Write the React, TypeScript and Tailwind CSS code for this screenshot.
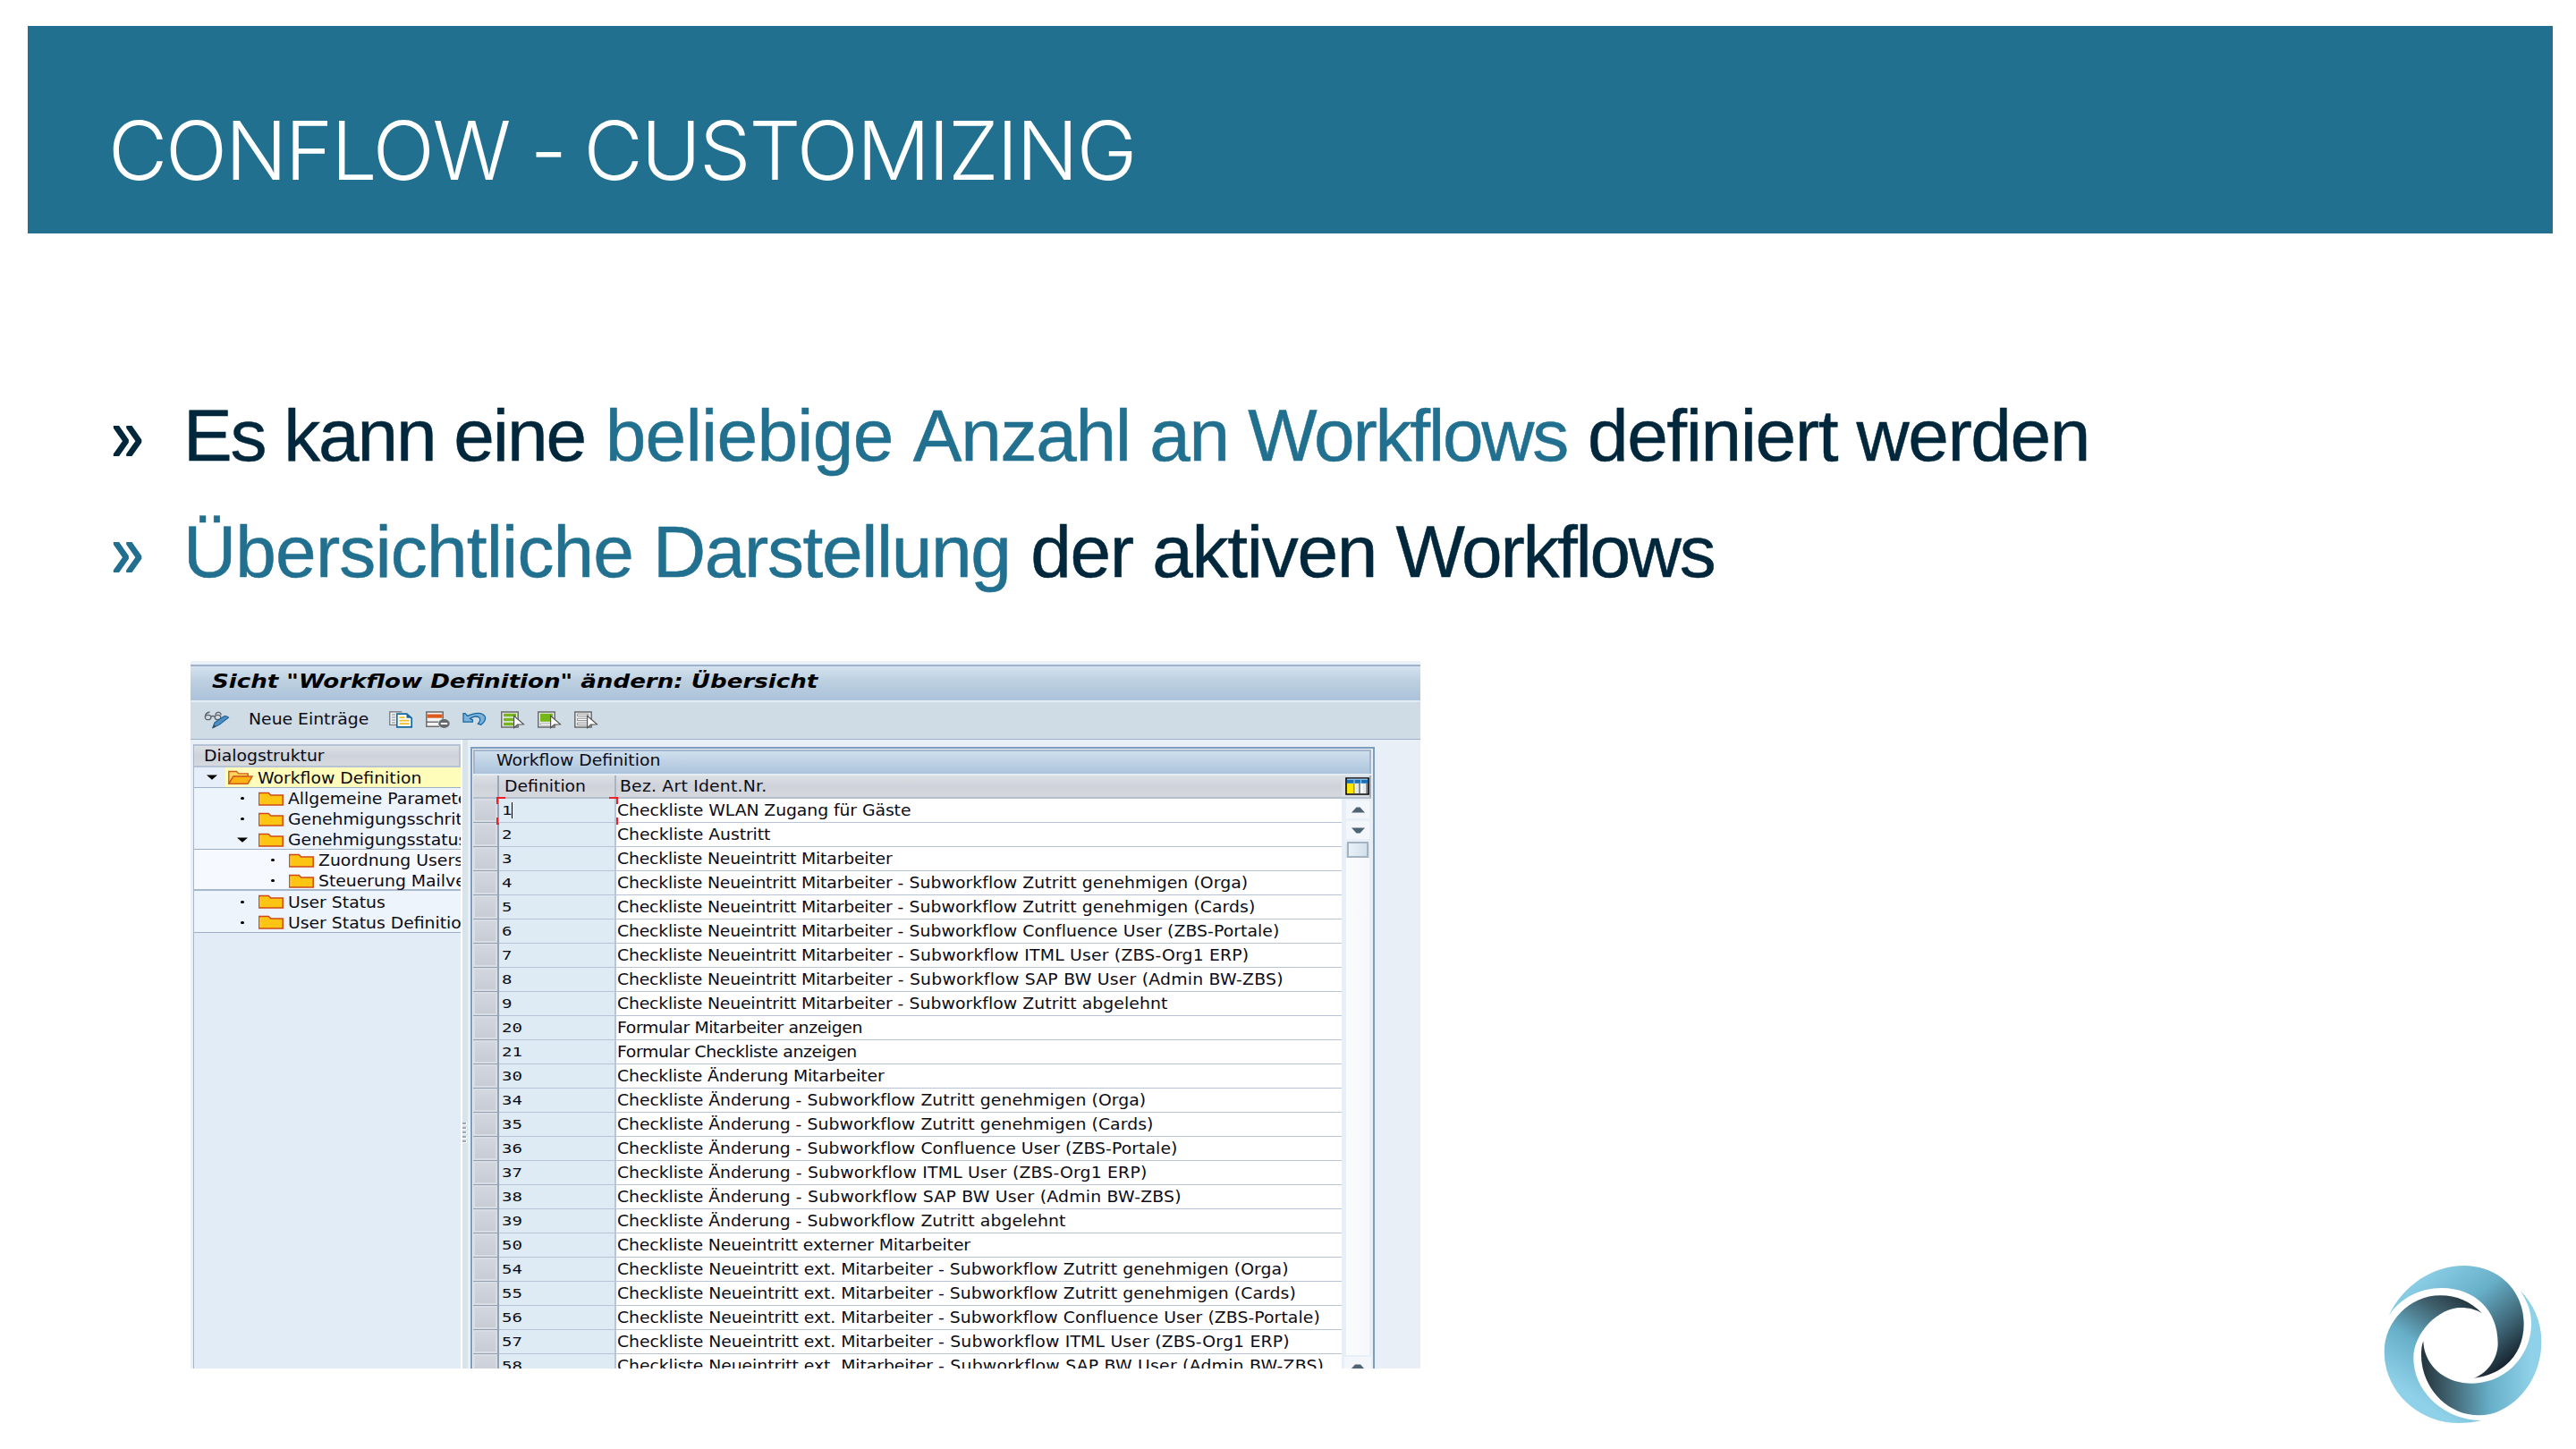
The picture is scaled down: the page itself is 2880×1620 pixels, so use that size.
import type { ReactNode } from "react";

const rows: [string, string, string?][] = [
  ["1", "Checkliste WLAN Zugang für Gäste"],
  ["2", "Checkliste Austritt"],
  ["3", "Checkliste Neueintritt Mitarbeiter"],
  ["4", "Checkliste Neueintritt Mitarbeiter", "Subworkflow Zutritt genehmigen (Orga)"],
  ["5", "Checkliste Neueintritt Mitarbeiter", "Subworkflow Zutritt genehmigen (Cards)"],
  ["6", "Checkliste Neueintritt Mitarbeiter", "Subworkflow Confluence User (ZBS-Portale)"],
  ["7", "Checkliste Neueintritt Mitarbeiter", "Subworkflow ITML User (ZBS-Org1 ERP)"],
  ["8", "Checkliste Neueintritt Mitarbeiter", "Subworkflow SAP BW User (Admin BW-ZBS)"],
  ["9", "Checkliste Neueintritt Mitarbeiter", "Subworkflow Zutritt abgelehnt"],
  ["20", "Formular Mitarbeiter anzeigen"],
  ["21", "Formular Checkliste anzeigen"],
  ["30", "Checkliste Änderung Mitarbeiter"],
  ["34", "Checkliste Änderung", "Subworkflow Zutritt genehmigen (Orga)"],
  ["35", "Checkliste Änderung", "Subworkflow Zutritt genehmigen (Cards)"],
  ["36", "Checkliste Änderung", "Subworkflow Confluence User (ZBS-Portale)"],
  ["37", "Checkliste Änderung", "Subworkflow ITML User (ZBS-Org1 ERP)"],
  ["38", "Checkliste Änderung", "Subworkflow SAP BW User (Admin BW-ZBS)"],
  ["39", "Checkliste Änderung", "Subworkflow Zutritt abgelehnt"],
  ["50", "Checkliste Neueintritt externer Mitarbeiter"],
  ["54", "Checkliste Neueintritt ext. Mitarbeiter", "Subworkflow Zutritt genehmigen (Orga)"],
  ["55", "Checkliste Neueintritt ext. Mitarbeiter", "Subworkflow Zutritt genehmigen (Cards)"],
  ["56", "Checkliste Neueintritt ext. Mitarbeiter", "Subworkflow Confluence User (ZBS-Portale)"],
  ["57", "Checkliste Neueintritt ext. Mitarbeiter", "Subworkflow ITML User (ZBS-Org1 ERP)"],
  ["58", "Checkliste Neueintritt ext. Mitarbeiter", "Subworkflow SAP BW User (Admin BW-ZBS)"],
];

function headTracking(text: string) {
  if (text.startsWith("Formular")) return "tracking-[-0.34px]";
  if (text.includes("ext. Mitarbeiter")) return "tracking-[-0.06px]";
  if (text.includes("externer")) return "tracking-[-0.1px]";
  if (text.includes("Mitarbeiter")) return "tracking-[-0.17px]";
  return "tracking-[-0.06px]";
}

function tailTracking(text: string) {
  if (text.includes("SAP")) return "tracking-[0.22px]";
  if (text.includes("ITML")) return "tracking-[0.19px]";
  return "tracking-[0.07px]";
}

function Wide({ children }: { children: ReactNode }) {
  return (
    <span className="inline-block origin-left scale-x-[1.081] whitespace-nowrap">{children}</span>
  );
}

function Folder() {
  return (
    <svg className="h-[16px] w-[28px] shrink-0" viewBox="0 0 28 16">
      <path d="M0.8 1.5h10.4l2.6 2.6h13.4v11H0.8z" fill="#fdc513" stroke="#cf4a1a" strokeWidth="1.5" />
      <path d="M1.9 14V2.8" stroke="#ffe27a" strokeWidth="0.8" />
    </svg>
  );
}

function FolderOpen() {
  return (
    <svg className="h-[16px] w-[28px] shrink-0" viewBox="0 0 28 16">
      <path d="M0.8 15V1.5h8.6l2.4 2.4h10.4v3.2H6z" fill="#fdd75a" stroke="#cf5a1a" strokeWidth="1.4" />
      <path d="M0.9 15.2 6 7h21l-5 8.2z" fill="#fbb312" stroke="#cf5a1a" strokeWidth="1.4" />
    </svg>
  );
}

function Dot() {
  return <span className="h-[3px] w-[4px] shrink-0 rounded-full bg-black" />;
}

function Caret() {
  return (
    <svg className="h-[6px] w-[12px] shrink-0" viewBox="0 0 12 6">
      <path d="M0 0.5h12L6 5.8z" fill="#000" />
    </svg>
  );
}

function TreeRow({ level, open, label }: { level: 1 | 2; open?: boolean; label: string }) {
  return (
    <div
      className={
        level === 1
          ? "flex h-[23.1px] items-center pl-[47px]"
          : "flex h-[23.1px] items-center pl-[81px]"
      }
    >
      <span className="flex w-[14px] shrink-0 items-center justify-center">{open ? <Caret /> : <Dot />}</span>
      <span className="ml-[11px] flex">
        <Folder />
      </span>
      <span className="ml-[5px] pt-[2px] leading-[23px]">
        <Wide>{label}</Wide>
      </span>
    </div>
  );
}

function GlassesPen() {
  return (
    <svg className="h-[20px] w-[30px]" viewBox="0 0 30 20">
      <g fill="none" stroke="#5f6468" strokeWidth="1.3">
        <ellipse cx="4.6" cy="7" rx="3.3" ry="2.7" />
        <ellipse cx="15.5" cy="7" rx="3.3" ry="2.7" />
        <path d="M8 6.5q2-2 4 0M1.3 6.5Q1.5 2 6.5 1M12.6 4.4q.6-2.4 3.4-3.2q3 .4 3.2 3" />
      </g>
      <path d="M9.8 18.8 12 12.8 22.5 5.8q2.8-.6 5 1.4L17 15.4z" fill="#4d8fc4" stroke="#1d5f94" strokeWidth="1.1" />
      <path d="M9.8 18.8l1.6-3.6 2 2.6z" fill="#444" />
    </svg>
  );
}

function CopyIcon() {
  return (
    <svg className="h-[20px] w-[28px]" viewBox="0 0 28 20">
      <path d="M8 15.5H0.8V0.8h13.5" fill="#eef3f7" stroke="#6b6f73" strokeWidth="1.2" />
      <path d="M3 4h4M3 7h4M3 10h4M3 13h4" stroke="#888" strokeWidth="1" />
      <path d="M8.8 3.2h11l5.4 4.6v10H8.8z" fill="#fff" stroke="#17679f" strokeWidth="1.7" />
      <path d="M19.5 3.2v4.6h5.6z" fill="#17679f" />
      <path d="M11.5 7.2h6M11.5 10.6h11M11.5 14.2h11" stroke="#f2bd25" strokeWidth="1.8" />
    </svg>
  );
}

function DeleteRowIcon() {
  return (
    <svg className="h-[20px] w-[28px]" viewBox="0 0 28 20">
      <path d="M0.8 0.9h18.4v16.4H0.8z" fill="#f4f4f4" stroke="#6a6a6a" strokeWidth="1.5" />
      <path d="M1.5 3.5h17v4.2h-17z" fill="#dd5a1c" />
      <path d="M1 12.2h18" stroke="#6a6a6a" strokeWidth="1.4" />
      <ellipse cx="20.5" cy="14" rx="7" ry="5.6" fill="#cfdce6" />
      <ellipse cx="20.5" cy="14" rx="6.2" ry="4.9" fill="#66696c" />
      <path d="M16.8 14h7.4" stroke="#fff" strokeWidth="2" />
    </svg>
  );
}

function UndoIcon() {
  return (
    <svg className="h-[20px] w-[28px]" viewBox="0 0 28 20">
      <path
        d="M1 2.6v9.6h10.4V10L8.6 8.4q5-3.6 9.4-1.8q3.800 3-.6 7.600l3.400 1q6-4.200 4.400-9.200Q20.600-1 5.600 5.400L3 2.600z"
        fill="#7fb2d9"
        stroke="#17679f"
        strokeWidth="1.3"
      />
    </svg>
  );
}

function SelectIcon({ kind }: { kind: "all" | "block" | "none" }) {
  return (
    <svg className="h-[20px] w-[28px]" viewBox="0 0 28 20">
      <path d="M0.8 0.9h18.4v17.2H0.8z" fill="#eef1f3" stroke="#6a6a6a" strokeWidth="1.5" />
      {kind === "all" && <path d="M3 2.8h14v3.4H3zM3 7.8h14v3.4H3zM3 12.8h14v3.4H3z" fill="#76b51b" />}
      {kind === "block" && (
        <>
          <path d="M3 2.8h14v9H3z" fill="#76b51b" />
          <path d="M3.4 13.6h12v2.4h-12z" fill="#fff" stroke="#999" strokeWidth="0.8" />
        </>
      )}
      {kind === "none" && (
        <path
          d="M3.4 3.2h12.6v2.4H3.4zM3.4 8.2h12.6v2.4H3.4zM3.4 13.2h12.6v2.4H3.4z"
          fill="#fff"
          stroke="#8d8d8d"
          strokeWidth="1"
        />
      )}
      <path d="M14.6 5.4v13.2l4-3.4 6.8-.4z" fill="#fff" stroke="#555" strokeWidth="1.2" />
    </svg>
  );
}

function ColumnsIcon() {
  return (
    <svg className="h-[20px] w-[27px]" viewBox="0 0 27 20">
      <path d="M1 1h25v18H1z" fill="#fff" stroke="#000" strokeWidth="1.6" />
      <path d="M2 2.5h23v4.3H2z" fill="#1c6fb4" />
      <path d="M2 2.2h23" stroke="#7ec3ee" strokeWidth="1" />
      <path d="M2 7h7v11H2z" fill="#ffe800" />
      <path d="M9 7h1.6v11H9z" fill="#b49a00" />
      <path d="M12 7h3v11h-3zM19.5 7h3v11h-3z" fill="#e3e8ec" />
      <path d="M15 7h2v11h-2zM23 7h2v11h-2z" fill="#8b8f93" />
      <path d="M10 2v5M17.5 2v5" stroke="#8ccaf0" strokeWidth="1.2" />
    </svg>
  );
}

function ScrollButton({ up }: { up?: boolean }) {
  return (
    <div className="mx-auto flex h-[20px] w-[26px] shrink-0 items-center justify-center bg-[#f3f6fb]">
      <svg className="h-[7px] w-[15px]" viewBox="0 0 15 7">
        <path d={up ? "M0 6.5h15L9.5 0.5h-4z" : "M0 0.5h15L9.5 6.5h-4z"} fill="#4f6473" />
      </svg>
    </div>
  );
}

function Logo() {
  return (
    <svg className="h-[220px] w-[230px]" viewBox="0 0 690 660">
      <defs>
        <linearGradient id="top" gradientUnits="userSpaceOnUse" x1="200" y1="90" x2="470" y2="430">
          <stop offset="0" stopColor="#8fd1e9" />
          <stop offset="0.42" stopColor="#67afc8" />
          <stop offset="0.75" stopColor="#3d6373" />
          <stop offset="1" stopColor="#14202a" />
        </linearGradient>
        <linearGradient id="left" gradientUnits="userSpaceOnUse" x1="370" y1="170" x2="150" y2="500">
          <stop offset="0" stopColor="#1c2a33" />
          <stop offset="0.28" stopColor="#41626f" />
          <stop offset="0.6" stopColor="#67afc8" />
          <stop offset="1" stopColor="#8fd1e9" />
        </linearGradient>
        <linearGradient id="right" gradientUnits="userSpaceOnUse" x1="200" y1="450" x2="570" y2="440">
          <stop offset="0" stopColor="#22323b" />
          <stop offset="0.25" stopColor="#41626f" />
          <stop offset="0.62" stopColor="#67afc8" />
          <stop offset="1" stopColor="#8fd1e9" />
        </linearGradient>
      </defs>
      <path
        d="M92 243C140 140 240 75 345 75C460 75 545 160 545 270C545 370 480 440 378 452C425 435 458 385 458 335C458 225 380 150 270 150C195 150 130 185 92 243Z"
        fill="url(#top)"
      />
      <path
        d="M405 235C365 195 320 175 265 175C160 175 77 265 77 365C77 500 195 603 325 603C355 603 380 600 402 595C280 592 175 500 175 385C175 300 260 215 335 216C360 216 385 222 405 235Z"
        fill="url(#left)"
      />
      <path
        d="M208 328C210 410 280 470 370 470C480 470 570 380 570 270C570 230 558 195 532 158C580 205 604 265 604 330C604 470 500 577 395 577C285 577 201 480 201 375C201 355 203 340 208 328Z"
        fill="url(#right)"
      />
    </svg>
  );
}

function Bullet({ tone, children }: { tone: string; children: ReactNode }) {
  return (
    <li className="flex h-[130px] items-center">
      <span className={tone}>
        <span className="inline-block origin-left scale-x-[0.77] [-webkit-text-stroke:2px_currentColor]">»</span>
      </span>
      <span className="whitespace-nowrap [-webkit-text-stroke:0.5px_currentColor]">{children}</span>
    </li>
  );
}

function TreePanel() {
  return (
    <div className="mt-[5px] flex w-[299px] shrink-0 flex-col overflow-hidden border-l border-[#a9b6c8] bg-[#e1ecf7]">
      <div className="h-[26px] shrink-0 border-2 border-l-0 border-[#b5c3d4] bg-linear-to-b from-[#dde0e4] via-[#ced2da] to-[#d6dade] pl-[11px] leading-[23px]">
        <Wide>Dialogstruktur</Wide>
      </div>
      <div className="flex h-[23px] shrink-0 items-center border-b border-[#9db0c8] bg-[#e6eefa] pl-[14px]">
        <Caret />
        <div className="ml-[9px] flex h-full flex-1 items-center bg-[#fffdb9] pl-[3px]">
          <FolderOpen />
          <span className="ml-[5px] pt-[2px] leading-[23px]">
            <Wide>Workflow Definition</Wide>
          </span>
        </div>
      </div>
      <div className="h-[69.3px] shrink-0 border-b border-[#9db0c8] bg-[#edf4fc]">
        <TreeRow level={1} label="Allgemeine Parameter" />
        <TreeRow level={1} label="Genehmigungsschritte" />
        <TreeRow level={1} open label="Genehmigungsstatus" />
      </div>
      <div className="h-[46.2px] shrink-0 border-b-2 border-[#a9b9cd] bg-[#f6f9ff]">
        <TreeRow level={2} label="Zuordnung Userstatus" />
        <TreeRow level={2} label="Steuerung Mailversand" />
      </div>
      <div className="h-[46.2px] shrink-0 border-b border-[#9db0c8] bg-[#edf4fc]">
        <TreeRow level={1} label="User Status" />
        <TreeRow level={1} label="User Status Definition" />
      </div>
    </div>
  );
}

function FocusCorners() {
  return (
    <>
      <span className="absolute -top-[2px] -left-[3px] h-[8px] w-[10px] border-t-2 border-l-2 border-[#ee2026]" />
      <span className="absolute -top-[2px] -right-[4px] h-[8px] w-[10px] border-t-2 border-r-2 border-[#ee2026]" />
      <span className="absolute -bottom-[3px] -left-[3px] h-[8px] w-[10px] border-b-2 border-l-2 border-[#ee2026]" />
      <span className="absolute -right-[4px] -bottom-[3px] h-[8px] w-[10px] border-r-2 border-b-2 border-[#ee2026]" />
      <span className="absolute top-[4px] left-[14px] h-[18px] w-px bg-black" />
    </>
  );
}

function TablePanel() {
  return (
    <div className="ml-[3px] mt-[8px] flex w-[1011px] shrink-0 flex-col overflow-hidden border-2 border-b-0 border-[#7f9cbf] bg-[#e8eff7] pt-[1px] pr-[2px] pl-[1px]">
      <div className="h-[27px] shrink-0 border-2 border-b-0 border-[#a3b6cd] bg-linear-to-b from-[#cfdfed] to-[#acc4dc] pl-[24px] leading-[21px]">
        <Wide>Workflow Definition</Wide>
      </div>
      <div className="flex h-[28px] shrink-0 border-t-2 border-b-2 border-t-[#e3ebf3] border-b-[#b3bfcd]">
        <div className="w-[29px] border-r-2 border-[#9aa6b5] bg-linear-to-b from-[#dcdfe3] via-[#cfd2da] to-[#d5d9dd]" />
        <div className="w-[131px] border-r-2 border-[#aab5c3] bg-linear-to-b from-[#dcdfe3] via-[#cfd2da] to-[#d5d9dd] pl-[6px] leading-[25px]">
          <Wide>Definition</Wide>
        </div>
        <div className="w-[811px] bg-linear-to-b from-[#dcdfe3] via-[#cfd2da] to-[#d5d9dd] pl-[4px] leading-[25px]">
          <Wide>
            <span className="tracking-[0.2px]">Bez. Art Ident.Nr.</span>
          </Wide>
        </div>
        <div className="flex flex-1 items-center justify-end border-r-2 border-[#a3aebb] bg-[#d9dde3] pl-1">
          <ColumnsIcon />
        </div>
      </div>
      <div className="flex min-h-0 flex-1">
        <div className="h-full w-[971px] shrink-0">
          {rows.map(([id, head, tail], i) => (
            <div key={id} className="flex h-[27px]">
              <div className="w-[29px] shrink-0 border-r-2 border-b border-[#94a1b2] bg-[#d9dce2] p-[2px]">
                <div className="h-full w-full bg-linear-to-b from-[#d2d6de] to-[#c8ccd4]" />
              </div>
              <div className="relative w-[131px] shrink-0 border-r-2 border-b border-[#b9c5d6] bg-[#deebf5] pl-[3px] leading-[25px]">
                <span className="inline-block origin-left scale-x-[1.3] font-['DejaVu_Sans_Mono',monospace] text-[14.7px]">
                  {id}
                </span>
                {i === 0 && <FocusCorners />}
              </div>
              <div className="w-[811px] shrink-0 border-b border-[#b9c5d6] bg-white pl-px leading-[27px]">
                <Wide>
                  <span className={headTracking(head)}>{head}</span>
                  {tail && <span className={tailTracking(tail)}> - {tail}</span>}
                </Wide>
              </div>
            </div>
          ))}
        </div>
        <div className="flex flex-1 flex-col pt-[2px] pl-[3px]">
          <ScrollButton up />
          <div className="h-[3px] shrink-0" />
          <ScrollButton />
          <div className="mx-auto mt-[3px] h-[18px] w-[24px] shrink-0 border-2 border-[#a4b3c2] bg-linear-to-r from-[#e9f1f8] to-[#d3e0ec] shadow-[0_2px_2px_rgba(0,0,0,0.18)]" />
          <div className="mx-auto mb-[2px] w-[26px] flex-1 bg-linear-to-r from-[#fafbfd] to-[#f6f8fb]" />
          <div className="flex h-[13px] shrink-0 flex-col justify-end overflow-hidden bg-[#f3f6fb]">
            <svg className="mx-auto h-[5px] w-[14px]" viewBox="0 0 14 5">
              <path d="M0 5 4 0.5h6L14 5z" fill="#4f6473" />
            </svg>
          </div>
        </div>
      </div>
    </div>
  );
}

function SapWindow() {
  return (
    <div className="flex h-[791px] w-[1375px] flex-col overflow-hidden bg-[#e8eff7] font-['DejaVu_Sans',sans-serif] text-[17.4px] text-[#0b0b14]">
      <div className="h-[6px] shrink-0 border-b-2 border-[#9fb2cb] bg-[#eaf1f8]" />
      <div className="h-[38px] shrink-0 bg-linear-to-b from-[#d4e2ef] via-[#bccfdf] via-45% to-[#abc2db] pl-[24px] text-[21px] leading-[34px] font-bold text-black italic">
        <span className="inline-block origin-left scale-x-[1.243] whitespace-nowrap">
          Sicht "Workflow Definition" ändern: Übersicht
        </span>
      </div>
      <div className="flex h-[44px] shrink-0 items-center border-t-2 border-b border-t-[#e3ecf4] border-b-[#9fb0c8] bg-[#cfdce6] pb-[2px] pl-[15px]">
        <GlassesPen />
        <span className="ml-[20px] w-[156px]">
          <Wide>Neue Einträge</Wide>
        </span>
        <span className="ml-px flex gap-[13px]">
          <CopyIcon />
          <DeleteRowIcon />
          <UndoIcon />
          <span className="ml-[2px] flex gap-[13px]">
            <SelectIcon kind="all" />
            <SelectIcon kind="block" />
            <SelectIcon kind="none" />
          </span>
        </span>
      </div>
      <div className="flex min-h-0 flex-1 pl-[3px]">
        <TreePanel />
        <div className="w-[2px] shrink-0 bg-white" />
        <div className="flex w-[6px] shrink-0 flex-col bg-[#d9e4ea] pt-[428px]">
          {[0, 1, 2, 3, 4].map((n) => (
            <span key={n} className="mb-[2px] h-[3px] w-[5px] border-r border-b border-white bg-[#98a6b5]" />
          ))}
        </div>
        <TablePanel />
      </div>
    </div>
  );
}

export default function App() {
  return (
    <main className="flex h-[1620px] w-[2880px] flex-col overflow-hidden bg-white">
      <header className="mt-[29px] ml-[31px] h-[232px] w-[2823px] shrink-0 bg-[#22708f] pt-[84px] pl-[90px]">
        <h1 className="font-['Inter',sans-serif] text-[91px] leading-[110px] font-light whitespace-nowrap text-white [font-feature-settings:'calt'_0]">
          <span className="tracking-[-2.2px]">CONFLOW </span>
          <span className="tracking-[-3.5px]">- </span>
          <span className="tracking-[-1.9px]">CUSTOMIZING</span>
        </h1>
      </header>
      <ul className="mt-[161px] ml-[125px] font-['Liberation_Sans',Arial,sans-serif] text-[82px] leading-[130px] text-[#00273b]">
        <Bullet tone="w-[80px] shrink-0 text-[#00273b]">
          <span className="tracking-[-2.1px]">Es kann eine</span>{" "}
          <span className="text-[#22708f]">
            <span className="tracking-[-0.7px]">beliebige </span>
            <span className="tracking-[-1.3px]">Anzahl an </span>
            <span className="tracking-[-2.2px]">Workflows</span>
          </span>{" "}
          <span className="tracking-[-1.4px]">definiert werden</span>
        </Bullet>
        <Bullet tone="w-[80px] shrink-0 text-[#22708f]">
          <span className="text-[#22708f]">
            <span className="tracking-[-0.85px]">Übersichtliche </span>
            <span className="tracking-[-1.4px]">Darstellung</span>
          </span>{" "}
          <span className="tracking-[-1.3px]">der aktiven </span>
          <span className="tracking-[-2.3px]">Workflows</span>
        </Bullet>
      </ul>
      <section className="mt-[57px] flex flex-1 items-start pl-[213px]">
        <SapWindow />
        <div className="mr-[10px] mb-[10px] ml-auto self-end">
          <Logo />
        </div>
      </section>
    </main>
  );
}
